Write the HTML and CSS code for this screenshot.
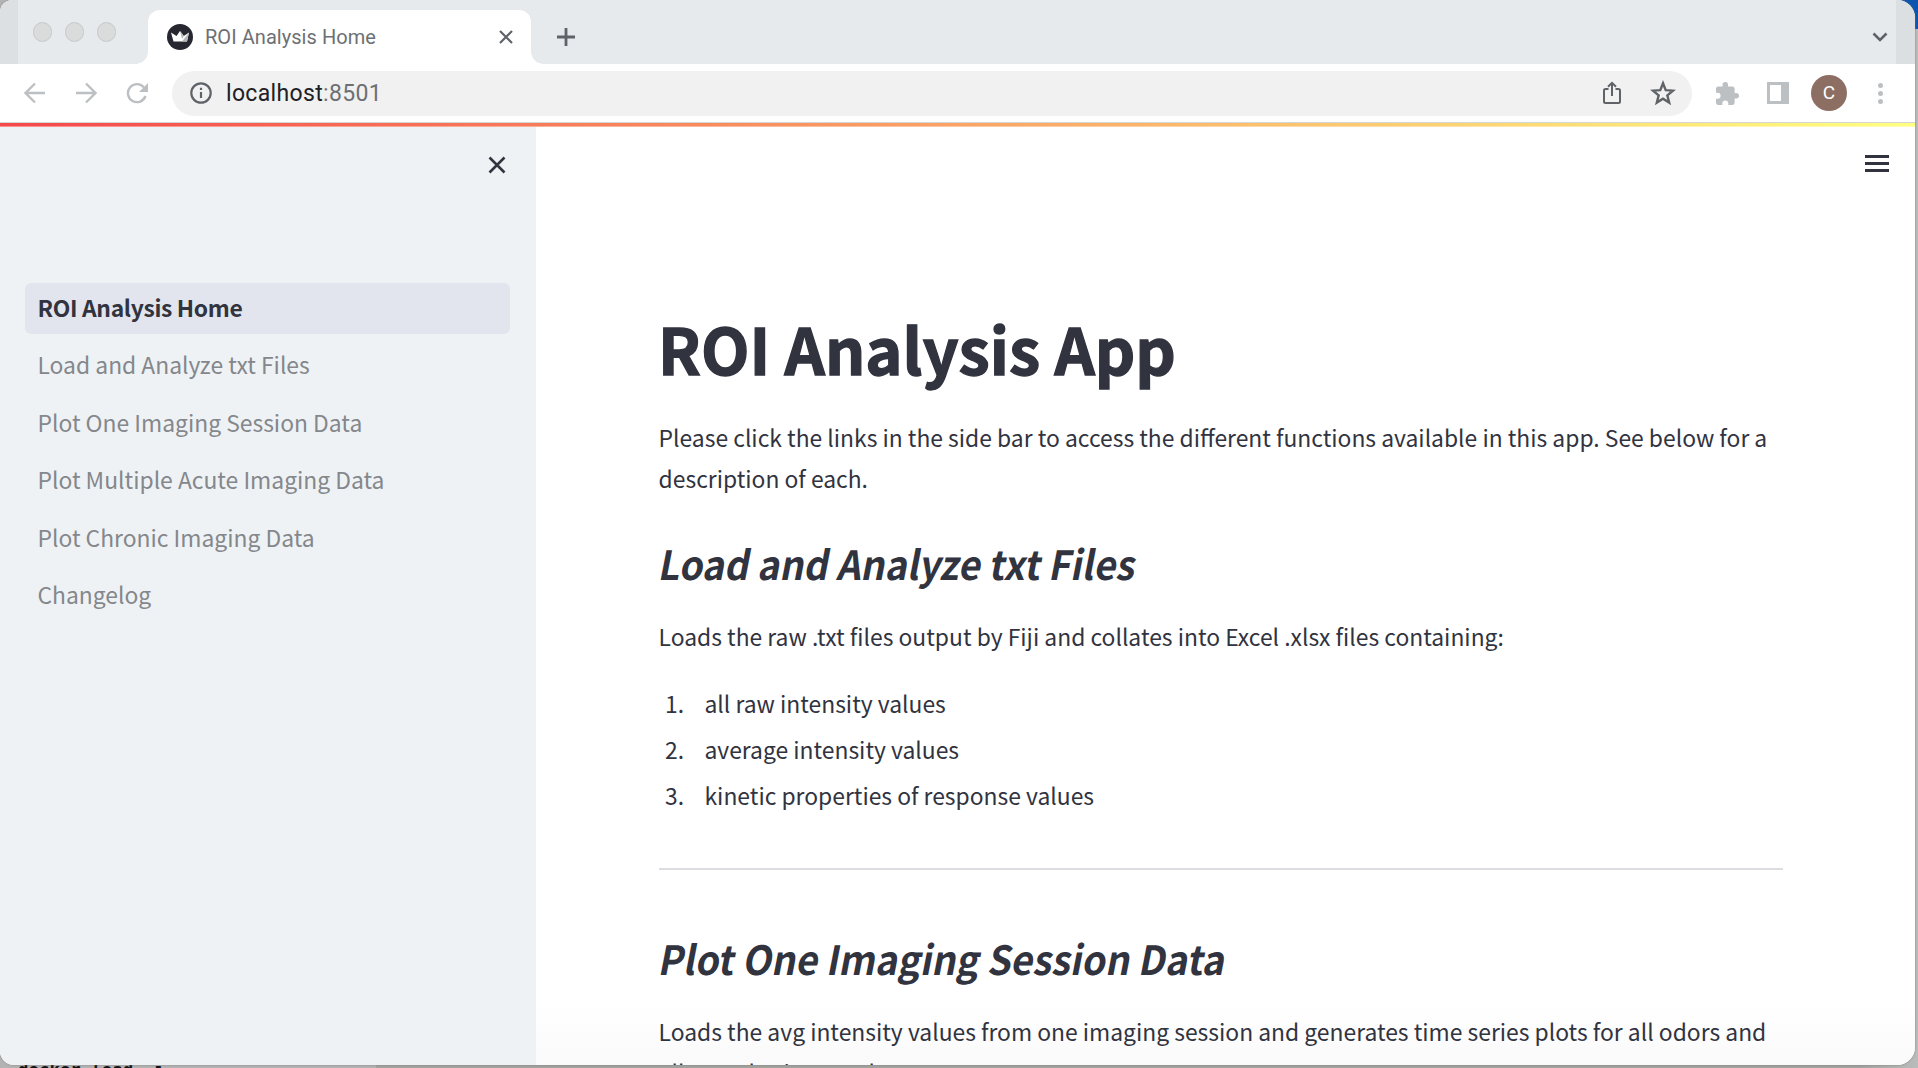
FILE: index.html
```html
<!DOCTYPE html>
<html lang="en">
<head>
<meta charset="utf-8">
<title>ROI Analysis Home</title>
<link rel="stylesheet" href="styles.css">
</head>
<body>
<div class="desktop">
  <div class="wallpaper"></div>
  <div class="terminal">docker load -i</div>
  <div class="window">
    <header class="tabstrip">
      <div class="lights"><i></i><i></i><i></i></div>
      <div class="tab">
        <svg class="favicon" viewBox="0 0 26 26"><circle cx="13" cy="13" r="13" fill="#262730"/><path d="M4 8.500l5.500 3.500L13 7l3.800 5L22 8.500 20 17.500H6.500z" fill="#fff"/><path d="M13 7l3.800 5L15 15zM22 8.500L20 17.500h-5z" fill="#b5b7ba"/></svg>
        <span class="tab-title">ROI Analysis Home</span>
        <svg class="tab-close" viewBox="0 0 14 14"><path d="M1 1l12 12M13 1L1 13"/></svg>
      </div>
      <svg class="new-tab" viewBox="0 0 20 20"><path d="M10 1v18M1 10h18"/></svg>
      <svg class="chevron" viewBox="0 0 16 10"><path d="M1.500 1.500L8 8l6.500-6.500"/></svg>
    </header>
    <div class="toolbar">
      <svg class="nav-icon" viewBox="0 0 22 22"><path d="M21 11H2M11 1.500L1.500 11l9.500 9.500"/></svg>
      <svg class="nav-icon" viewBox="0 0 22 22"><path d="M1 11h19M11 1.500l9.500 9.500-9.500 9.500"/></svg>
      <svg class="nav-icon" viewBox="0 0 22 22"><path d="M19.500 14a9 9 0 1 1-1.500-8.500"/><path class="solid" d="M22 1v9h-9z"/></svg>
      <div class="omnibox">
        <svg class="info" viewBox="0 0 22 22"><circle cx="11" cy="11" r="9.700"/><path d="M11 10v6M11 5.800v2.200"/></svg>
        <span class="url">localhost<span class="port">:8501</span></span>
        <svg class="share" viewBox="0 0 18 24"><path d="M5.500 8H2.500Q1 8 1 9.500v11Q1 22 2.500 22h13q1.500 0 1.500-1.500v-11Q17 8 15.500 8h-3M9 15V2M5 5.800L9 1.800l4 4"/></svg>
        <svg class="star" viewBox="0 0 24 24"><path d="M12 3l2.500 6.300 6.700.5-5.200 4.400 1.700 6.600L12 17.200l-5.700 3.600L8 14.200 2.800 9.800l6.700-.5z"/></svg>
      </div>
      <svg class="puzzle" viewBox="2 1 21 21"><path d="M20.500 11H19V7c0-1.100-.9-2-2-2h-4V3.500a2.500 2.500 0 0 0-5 0V5H4c-1.100 0-2 .9-2 2v3.800h1.500a2.700 2.700 0 0 1 0 5.400H2V20c0 1.100.9 2 2 2h3.800v-1.500a2.700 2.700 0 0 1 5.400 0V22H17c1.100 0 2-.9 2-2v-4h1.500a2.500 2.500 0 0 0 0-5z"/></svg>
      <div class="side-panel"></div>
      <div class="avatar">C</div>
      <div class="dots"><i></i><i></i><i></i></div>
    </div>
    <div class="decoration"></div>
    <div class="app">
      <aside class="sidebar">
        <svg class="side-close" viewBox="0 0 18 18"><path d="M1.500 1.500l15 15M16.500 1.500l-15 15"/></svg>
        <nav class="nav">
          <a class="active">ROI Analysis Home</a>
          <a>Load and Analyze txt Files</a>
          <a>Plot One Imaging Session Data</a>
          <a>Plot Multiple Acute Imaging Data</a>
          <a>Plot Chronic Imaging Data</a>
          <a>Changelog</a>
        </nav>
      </aside>
      <main class="main">
        <div class="menu"><i></i><i></i><i></i></div>
        <h1>ROI Analysis App</h1>
        <p>Please click the links in the side bar to access the different functions available in this app. See below for a<br>description of each.</p>
        <h2>Load and Analyze txt Files</h2>
        <p>Loads the raw .txt files output by Fiji and collates into Excel .xlsx files containing:</p>
        <ol>
          <li>all raw intensity values</li>
          <li>average intensity values</li>
          <li>kinetic properties of response values</li>
        </ol>
        <hr>
        <h2>Plot One Imaging Session Data</h2>
        <p>Loads the avg intensity values from one imaging session and generates time series plots for all odors and<br>all samples in one plot.</p>
      </main>
    </div>
  </div>
</div>
</body>
</html>
```
FILE: styles.css
```css
* { box-sizing: border-box; }
body { margin: 0; overflow: hidden; font-family: "Noto Sans CJK SC", "Noto Sans", sans-serif; color: #31333f; }
svg { display: block; flex: none; fill: none; stroke-linecap: butt; }
.desktop { position: relative; width: 1918px; height: 1068px; overflow: hidden; background: linear-gradient(90deg, #b4b3b3 0 376px, #a2a29f 376px 1860px, #b9bcbb); }
.wallpaper { position: absolute; right: 0; top: 0; width: 20px; height: 29px; background: #0b55ae; }
.terminal { position: absolute; left: 18px; top: 1061px; font: bold 17.400px/19px "DejaVu Sans Mono", monospace; color: #111; white-space: pre; }
.window { position: relative; width: 1915px; height: 1065px; overflow: hidden; border-radius: 12px 18px 18px 14px; background: #fff; box-shadow: 0 0 2px #777; display: flex; flex-direction: column; }
.tabstrip { height: 64px; flex: none; display: flex; background: linear-gradient(90deg, #dce0e3 0 18px, #e6eaec 18px 1896px, #dcdfe1 1896px); }
.lights { display: flex; gap: 12.500px; padding: 22px 0 0 32.500px; width: 148px; flex: none; }
.lights i { width: 19.500px; height: 19.500px; border-radius: 50%; background: #d9dcdb; border: 1px solid #c6c9c8; }
.tab { position: relative; width: 383px; margin-top: 10px; flex: none; background: #fff; border-radius: 12px 12px 0 0; display: flex; align-items: center; padding: 0 18px 0 19px; }
.tab::before, .tab::after { content: ""; position: absolute; bottom: 0; width: 12px; height: 12px; }
.tab::before { left: -12px; background: radial-gradient(circle at 0 0, transparent 11.500px, #fff 12px); }
.tab::after { right: -12px; background: radial-gradient(circle at 100% 0, transparent 11.500px, #fff 12px); }
.favicon { width: 26px; height: 26px; }
.tab-title { margin-left: 12px; font: 20px/24px Roboto, sans-serif; color: #6d7073; flex: 1; white-space: nowrap; letter-spacing: .05px; }
.tab-close { width: 14px; height: 14px; stroke: #5f6368; stroke-width: 2.200; }
.new-tab { width: 20px; height: 20px; margin: 27px 0 0 25px; stroke: #5f6368; stroke-width: 2.800; }
.chevron { width: 16px; height: 10px; margin: 32px 27px 0 auto; stroke: #5f6368; stroke-width: 2.600; }
.toolbar { height: 58px; flex: none; display: flex; align-items: center; padding: 0 32px 0 24px; }
.nav-icon { width: 22px; height: 22px; margin-right: 29px; stroke: #bdc0c2; stroke-width: 2.400; }
.nav-icon + .nav-icon + .nav-icon { margin-right: 24px; }
.nav-icon .solid { fill: #bdc0c2; stroke: none; }
.omnibox { width: 1520px; height: 45px; border-radius: 23px; background: #f1f1f1; display: flex; align-items: center; padding: 0 16px 0 18px; flex: none; }
.info { width: 22px; height: 22px; stroke: #5f6368; stroke-width: 2.200; }
.url { margin: 2px 0 0 14px; font: 23px/28px Roboto, sans-serif; letter-spacing: .33px; color: #202124; flex: 1; }
.port { color: #6d7073; }
.share { width: 18px; height: 24px; stroke: #5f6368; stroke-width: 2; }
.star { width: 26px; height: 26px; margin-left: 29px; stroke: #5f6368; stroke-width: 2.200; }
.puzzle { width: 23px; height: 23px; margin-left: 24px; fill: #bdc0c2; }
.side-panel { width: 22px; height: 22px; margin-left: 28px; border: 3px solid #bdc0c2; border-right-width: 8px; }
.avatar { width: 36px; height: 36px; margin-left: 22px; border-radius: 50%; background: #8d6e63; color: #fff; font: 19px/36px Roboto, sans-serif; text-align: center; }
.dots { margin-left: auto; display: flex; flex-direction: column; gap: 3px; }
.dots i { width: 5px; height: 5px; border-radius: 50%; background: #bdc0c2; }
.decoration { height: 5px; flex: none; border-top: 1px solid #d5d7d7; border-bottom: 1px solid #fff6; background: linear-gradient(90deg, #f5484b, #ffff80); }
.app { flex: 1; min-height: 0; display: flex; }
.sidebar { width: 536px; flex: none; background: #eff2f5; padding: 0 26px 0 25px; }
.side-close { width: 18px; height: 18px; margin: 29px 4px 0 auto; stroke: #31333f; stroke-width: 2.600; }
.nav { margin-top: 109px; display: flex; flex-direction: column; gap: 6.400px; font-size: 22.860px; }
.nav a { height: 51px; line-height: 49px; padding-left: 12.500px; border-radius: 6px; color: #84878b; white-space: nowrap; }
.nav .active { background: #e2e5ed; color: #31333f; font-weight: 700; letter-spacing: -.35px; }
.main { flex: 1; position: relative; padding: 179px 132px 0 123px; background: linear-gradient(#fff 93%, #fafafa); }
.menu { position: absolute; right: 26px; top: 28px; display: flex; flex-direction: column; gap: 4px; }
.menu i { width: 24px; height: 3px; background: #31333f; }
h1 { margin: 0 0 0 -1px; font-size: 63px; line-height: 84px; font-weight: 700; white-space: nowrap; -webkit-text-stroke: 1.300px #31333f; }
p { margin: 27px 0 0 -.4px; font-size: 22.860px; line-height: 41px; white-space: nowrap; }
h2 { margin: 37px 0 0 -1.500px; font-size: 40px; line-height: 54px; font-weight: 700; white-space: nowrap; transform: skewX(-11deg) scaleX(.942); transform-origin: 0 75%; }
h2 + p { margin-top: 26px; }
ol { margin: 23px 0 0; padding: 0; font-size: 22.860px; list-style: none; counter-reset: step; }
li { height: 46px; line-height: 46px; white-space: nowrap; display: flex; padding-left: 6px; counter-increment: step; }
li::before { content: counter(step) "."; width: 39.500px; }
hr { margin: 50px 0 61px; border: 0; height: 2px; background: #dcdde0; }
hr + h2 { margin-top: 0; transform: skewX(-11deg) scaleX(.946); }
hr + h2 + p { margin-top: 26px; }
```
